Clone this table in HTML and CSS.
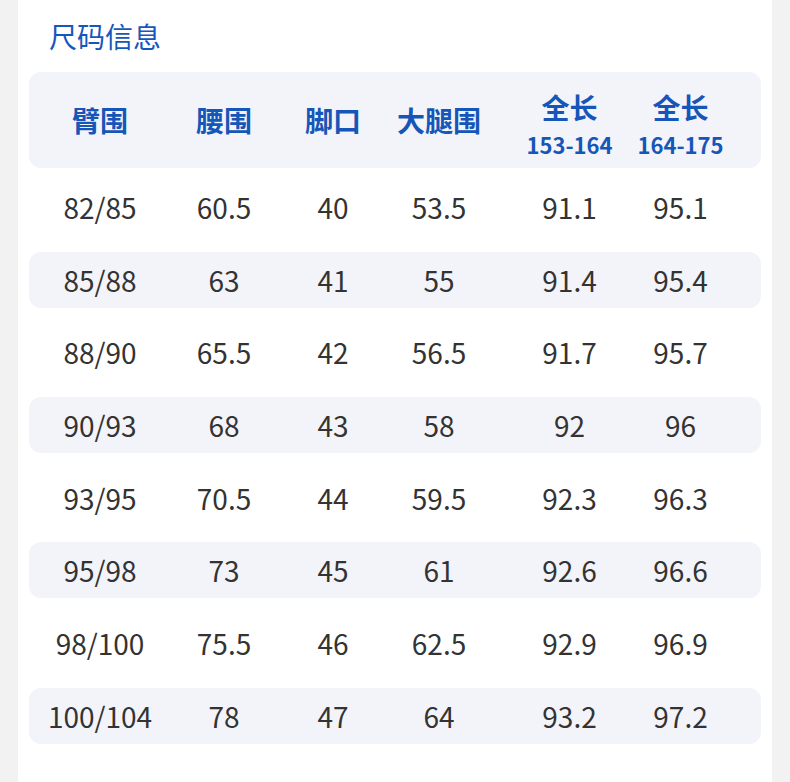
FILE: index.html
```html
<!DOCTYPE html>
<html lang="zh">
<head>
<meta charset="utf-8">
<title>尺码信息</title>
<link rel="stylesheet" href="styles.css">
</head>
<body>
<div class="panel">
  <h1 class="title">尺码信息</h1>
  <div class="table">
    <div class="row head">
      <div class="cell">臂围</div>
      <div class="cell">腰围</div>
      <div class="cell">脚口</div>
      <div class="cell">大腿围</div>
      <div class="cell two"><span>全长</span><span class="sub">153-164</span></div>
      <div class="cell two"><span>全长</span><span class="sub">164-175</span></div>
    </div>
    <div class="body">
      <div class="row"><div class="cell">82/85</div><div class="cell">60.5</div><div class="cell">40</div><div class="cell">53.5</div><div class="cell">91.1</div><div class="cell">95.1</div></div>
      <div class="row alt"><div class="cell">85/88</div><div class="cell">63</div><div class="cell">41</div><div class="cell">55</div><div class="cell">91.4</div><div class="cell">95.4</div></div>
      <div class="row"><div class="cell">88/90</div><div class="cell">65.5</div><div class="cell">42</div><div class="cell">56.5</div><div class="cell">91.7</div><div class="cell">95.7</div></div>
      <div class="row alt"><div class="cell">90/93</div><div class="cell">68</div><div class="cell">43</div><div class="cell">58</div><div class="cell">92</div><div class="cell">96</div></div>
      <div class="row"><div class="cell">93/95</div><div class="cell">70.5</div><div class="cell">44</div><div class="cell">59.5</div><div class="cell">92.3</div><div class="cell">96.3</div></div>
      <div class="row alt"><div class="cell">95/98</div><div class="cell">73</div><div class="cell">45</div><div class="cell">61</div><div class="cell">92.6</div><div class="cell">96.6</div></div>
      <div class="row"><div class="cell">98/100</div><div class="cell">75.5</div><div class="cell">46</div><div class="cell">62.5</div><div class="cell">92.9</div><div class="cell">96.9</div></div>
      <div class="row alt"><div class="cell">100/104</div><div class="cell">78</div><div class="cell">47</div><div class="cell">64</div><div class="cell">93.2</div><div class="cell">97.2</div></div>
    </div>
  </div>
</div>
</body>
</html>
```
FILE: styles.css
```css
html, body {
  margin: 0;
  padding: 0;
}
body {
  background: #f2f2f2;
  font-family: "Noto Sans CJK SC", "Noto Sans", sans-serif;
}
.panel {
  margin: 0 18px;
  background: #ffffff;
  min-height: 782px;
  padding: 16px 11px 0;
  box-sizing: border-box;
}
.title {
  margin: 0 0 16px 20px;
  font-size: 28px;
  line-height: 40px;
  font-weight: 400;
  color: #1657bd;
}
.row {
  display: grid;
  grid-template-columns: 142px 106px 112px 100px 136px 111px;
  align-items: center;
  height: 56px;
  border-radius: 12px;
}
.head {
  height: 96px;
  background: #f3f4f9;
  color: #1556b8;
  font-weight: 700;
  font-size: 28px;
}
.body {
  display: flex;
  flex-direction: column;
  gap: 16.67px;
  padding-top: 11px;
}
.alt {
  background: #f3f4f9;
}
.cell {
  text-align: center;
  font-size: 28px;
  line-height: 56px;
  color: #333333;
  white-space: nowrap;
}
.cell:nth-child(5) {
  padding-left: 25px;
}
.head .cell {
  color: #1556b8;
  font-weight: 700;
  line-height: 41px;
}
.two {
  display: flex;
  flex-direction: column;
  align-items: center;
  padding-top: 6px;
}
.two .sub {
  font-size: 22px;
  line-height: 32px;
}
```
